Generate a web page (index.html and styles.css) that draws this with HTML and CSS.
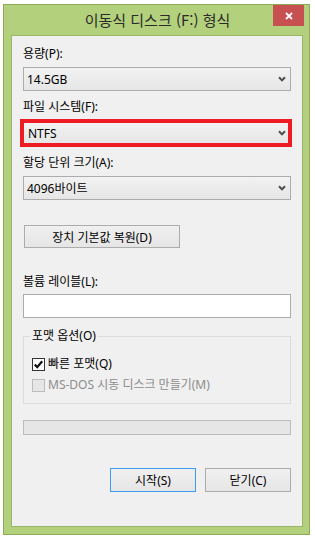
FILE: index.html
```html
<!DOCTYPE html>
<html lang="ko">
<head>
<meta charset="utf-8">
<title>이동식 디스크 (F:) 형식</title>
<link rel="stylesheet" href="styles.css">
</head>
<body>
<div class="window">
  <div class="titlebar">
    <span class="spacer"></span>
    <div class="title">이동식 디스크 (F:) 형식</div>
    <div class="close"><svg width="8" height="8" viewBox="0 0 8 8"><path d="M1 1L7 7M7 1L1 7" stroke="#fff" stroke-width="1.8" fill="none"/></svg></div>
  </div>
  <div class="panel">
    <div class="label">용량(P):</div>
    <div class="select"><span>14.5GB</span><svg class="chev" width="8" height="6" viewBox="0 0 8 6"><path d="M1 1.2L4 4.4L7 1.2" stroke="#4d4d4d" stroke-width="2" fill="none"/></svg></div>

    <div class="label gap8">파일 시스템(F):</div>
    <div class="select marked"><span>NTFS</span><svg class="chev" width="8" height="6" viewBox="0 0 8 6"><path d="M1 1.2L4 4.4L7 1.2" stroke="#4d4d4d" stroke-width="2" fill="none"/></svg></div>

    <div class="label gap8">할당 단위 크기(A):</div>
    <div class="select"><span>4096바이트</span><svg class="chev" width="8" height="6" viewBox="0 0 8 6"><path d="M1 1.2L4 4.4L7 1.2" stroke="#4d4d4d" stroke-width="2" fill="none"/></svg></div>

    <div class="btn restore">장치 기본값 복원(D)</div>

    <div class="label vol">볼륨 레이블(L):</div>
    <div class="input"></div>

    <fieldset class="group">
      <legend>포맷 옵션(O)</legend>
      <div class="check">
        <span class="box on"><svg width="11" height="11" viewBox="0 0 11 11"><path d="M1.8 5.6L4.2 8.2L9.2 2.2" stroke="#111" stroke-width="2.2" fill="none"/></svg></span>
        <span>빠른 포맷(Q)</span>
      </div>
      <div class="check disabled">
        <span class="box"></span>
        <span>MS-DOS 시동 디스크 만들기(M)</span>
      </div>
    </fieldset>

    <div class="progress"></div>

    <div class="actions">
      <div class="btn act default">시작(S)</div>
      <div class="btn act">닫기(C)</div>
    </div>
  </div>
</div>
</body>
</html>
```

FILE: styles.css
```css
html, body {
  margin: 0;
  padding: 0;
  background: #ffffff;
}
body {
  font-family: "Noto Sans", "Noto Sans CJK KR", sans-serif;
  font-size: 12px;
  color: #000;
}
.window {
  box-sizing: border-box;
  width: 307px;
  height: 531px;
  margin: 4px 0 0 3px;
  border: 1px solid #8eab5c;
  background: #b3d17c;
  padding: 0 6px 7px 7px;
  display: flex;
  flex-direction: column;
}
.titlebar {
  height: 30px;
  display: grid;
  grid-template-columns: 1fr auto 1fr;
  align-items: start;
  margin-right: -1px;
}
.title {
  font-family: "Noto Sans CJK KR", sans-serif;
  font-size: 15px;
  line-height: 30px;
  color: #2b2b2b;
  white-space: nowrap;
}
.close {
  justify-self: end;
  width: 31px;
  height: 21px;
  background: #c75050;
  display: flex;
  align-items: center;
  justify-content: center;
}
.panel {
  flex: 1;
  background: #f0f0f0;
  border: 1px solid #9ab66b;
  padding: 10px 11px 0;
  display: flex;
  flex-direction: column;
}
.label {
  height: 16px;
  line-height: 16px;
  white-space: nowrap;
}
.gap8 { margin-top: 8px; }
.select {
  box-sizing: border-box;
  height: 24px;
  margin-top: 5px;
  border: 1px solid #acacac;
  background: linear-gradient(#f2f2f2, #e6e6e6);
  display: flex;
  align-items: center;
  justify-content: space-between;
  padding: 0 4px 0 3px;
}
.select.marked {
  height: 28px;
  margin: 4px -1px 0 -3px;
  border: 4px solid #ed1c24;
  padding: 0 2px 0 4px;
}
.chev { display: block; }
.btn {
  box-sizing: border-box;
  border: 1px solid #acacac;
  background: linear-gradient(#f0f0f0, #e5e5e5);
  display: flex;
  align-items: center;
  justify-content: center;
  white-space: nowrap;
}
.restore {
  width: 156px;
  height: 23px;
  margin: 25px 0 0 1px;
}
.vol { margin-top: 26px; }
.input {
  box-sizing: border-box;
  height: 24px;
  margin-top: 4px;
  border: 1px solid #acacac;
  background: #fff;
}
.group {
  margin: 10px 0 0;
  padding: 12px 8px 10px;
  border: 1px solid #dcdcdc;
  min-width: 0;
}
.group legend {
  margin-left: -2px;
  padding: 0 2px;
  line-height: 16px;
}
.check {
  display: flex;
  align-items: center;
  gap: 3px;
  height: 16px;
  line-height: 16px;
  white-space: nowrap;
}
.check + .check { margin-top: 5px; }
.box {
  box-sizing: border-box;
  width: 13px;
  height: 13px;
  border: 1px solid #bcbcbc;
  background: #e6e6e6;
  display: flex;
  align-items: center;
  justify-content: center;
}
.box.on {
  border-color: #333;
  background: #fff;
}
.disabled { color: #8d8d8d; }
.progress {
  box-sizing: border-box;
  height: 15px;
  margin-top: 16px;
  border: 1px solid #bcbcbc;
  background: #e6e6e6;
}
.actions {
  display: flex;
  justify-content: flex-end;
  gap: 9px;
  margin-top: 33px;
}
.act {
  width: 86px;
  height: 24px;
}
.act.default {
  border-color: #3c9cee;
}
```
